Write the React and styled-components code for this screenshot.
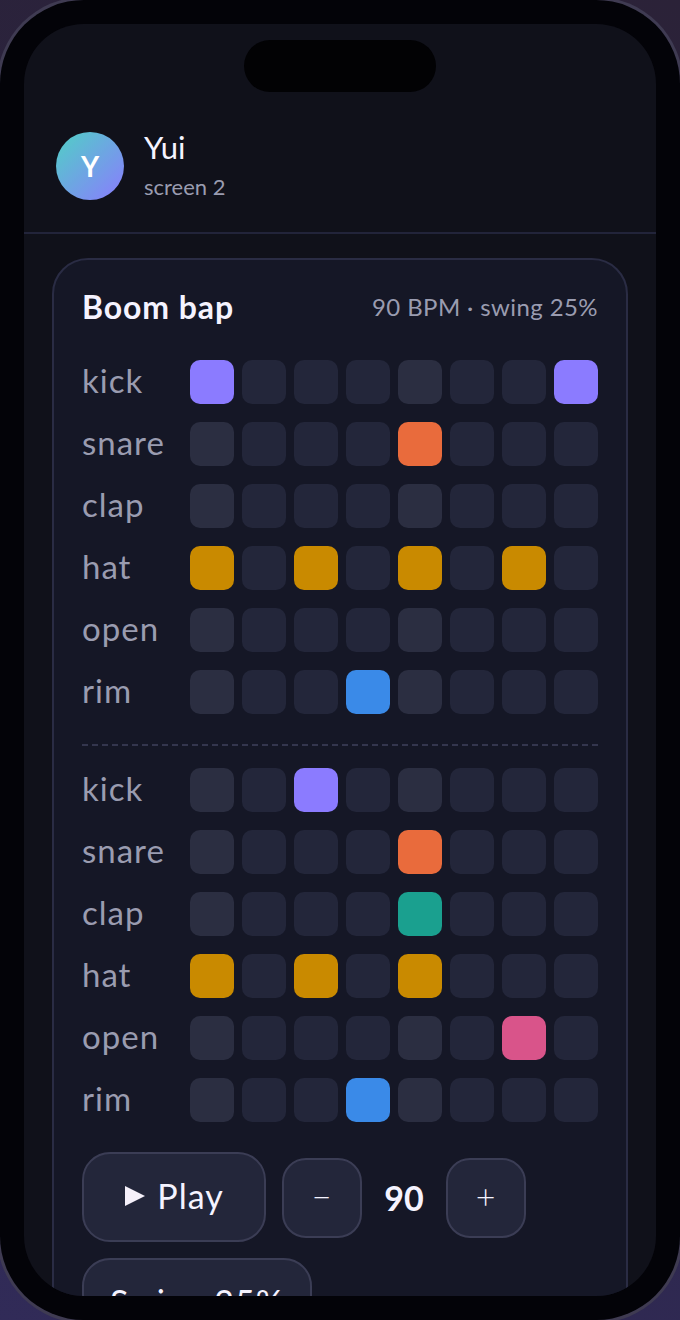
import React from "react";
import styled, { createGlobalStyle } from "styled-components";

const GlobalStyle = createGlobalStyle`
    * {
        box-sizing: border-box;
    }

    html, body {
        margin: 0;
        padding: 0;
        width: 680px;
        height: 1320px;
        overflow: hidden;
        background: linear-gradient(20deg, #312b58, #2a2340 60%, #2b2238);
    }

    body {
        font-family: Lato, "Noto Sans", sans-serif;
    }
`

const Phone = styled.div`
    position: relative;
    width: 680px;
    height: 1320px;
    padding: 24px;
    border-radius: 84px;
    background: #030308;
    box-shadow: 0 0 0 3px #3f3b52;
`

const Notch = styled.div`
    position: absolute;
    top: 40px;
    left: 244px;
    width: 192px;
    height: 52px;
    border-radius: 26px;
    background: #020204;
`

const Screen = styled.div`
    height: 1272px;
    border-radius: 60px;
    overflow: hidden;
    background: #10111a;
`

const Header = styled.header`
    display: flex;
    align-items: center;
    gap: 20px;
    height: 210px;
    padding: 108px 32px 32px;
    border-bottom: 2px solid #22243a;
`

const Avatar = styled.div`
    display: flex;
    align-items: center;
    justify-content: center;
    width: 68px;
    height: 68px;
    border-radius: 50%;
    background: linear-gradient(135deg, #4fd1c5, #8b7bff);
    color: #fff;
    font-size: 28px;
    font-weight: 700;
`

const Who = styled.div`
    display: flex;
    flex-direction: column;
    gap: 10px;
`

const Name = styled.strong`
    color: #f5f3ff;
    font-size: 31px;
    line-height: 32px;
    font-weight: 400;
`

const Sub = styled.span`
    color: #9a9cb0;
    font-size: 22px;
    line-height: 28px;
`

const Card = styled.section`
    margin: 24px 28px 0;
    padding: 26px 28px 0;
    height: 1100px;
    border: 2px solid #2a2c44;
    border-radius: 36px;
    background: #151726;
`

const CardHead = styled.div`
    display: flex;
    align-items: center;
    justify-content: space-between;
    height: 40px;
    margin-bottom: 34px;
`

const Title = styled.h2`
    margin: 0;
    color: #f5f3ff;
    font-size: 32px;
    font-weight: 700;
    letter-spacing: 0.9px;
`

const Meta = styled.span`
    color: #9a9cb0;
    font-size: 24px;
    letter-spacing: 0.4px;
`

const Grid = styled.div`
    display: flex;
    flex-direction: column;
    gap: 18px;
`

const Row = styled.div`
    display: flex;
    align-items: center;
    gap: 8px;
`

const Label = styled.span`
    width: 100px;
    height: 44px;
    color: #9a9cb0;
    font-size: 33px;
    line-height: 41px;
    letter-spacing: 1px;
`

const Cell = styled.div`
    width: 44px;
    height: 44px;
    border-radius: 10px;
    background: ${(p) => p.$color || (p.$beat ? "#2b2e41" : "#23263a")};
`

const Divider = styled.div`
    margin: 30px 0 22px;
    border-top: 2px dashed #34364e;
`

const Controls = styled.div`
    display: flex;
    flex-wrap: wrap;
    align-items: center;
    gap: 16px;
    margin-top: 30px;
`

const Button = styled.button`
    display: flex;
    align-items: center;
    justify-content: center;
    height: 90px;
    width: ${(p) => p.$width}px;
    gap: 11px;
    padding: 0 0 3px;
    border: 2px solid #3b3d55;
    border-radius: 28px;
    background: #23263a;
    color: #f5f3ff;
    font-family: inherit;
    font-size: 34px;
    letter-spacing: 1px;
`

const StepButton = styled(Button)`
    width: 80px;
    height: 80px;
    margin-top: 1px;
    border-radius: 24px;
    font-size: 34px;
    font-weight: 300;
    line-height: 1;
`

const Tempo = styled.strong`
    width: 52px;
    text-align: center;
    color: #f5f3ff;
    font-size: 34px;
    font-weight: 700;
`

const purple = "#8b7bff";
const orange = "#e96b3c";
const amber = "#c98a00";
const blue = "#3a8ae8";
const teal = "#1aa08f";
const pink = "#d9548a";

const patterns = [
    [
        ["kick", { 0: purple, 7: purple }],
        ["snare", { 4: orange }],
        ["clap", {}],
        ["hat", { 0: amber, 2: amber, 4: amber, 6: amber }],
        ["open", {}],
        ["rim", { 3: blue }],
    ],
    [
        ["kick", { 2: purple }],
        ["snare", { 4: orange }],
        ["clap", { 4: teal }],
        ["hat", { 0: amber, 2: amber, 4: amber }],
        ["open", { 6: pink }],
        ["rim", { 3: blue }],
    ],
]

function Pattern({ rows }) {
    return (
        <Grid>
            {rows.map(([name, hits]) => (
                <Row key={name}>
                    <Label>{name}</Label>
                    {[0, 1, 2, 3, 4, 5, 6, 7].map((i) => (
                        <Cell key={i} $beat={i % 4 === 0} $color={hits[i]} />
                    ))}
                </Row>
            ))}
        </Grid>
    )
}

export default function App() {
    return (
        <Phone>
            <GlobalStyle />
            <Notch />
            <Screen>
                <Header>
                    <Avatar>Y</Avatar>
                    <Who>
                        <Name>Yui</Name>
                        <Sub>screen 2</Sub>
                    </Who>
                </Header>
                <Card>
                    <CardHead>
                        <Title>Boom bap</Title>
                        <Meta>90 BPM · swing 25%</Meta>
                    </CardHead>
                    <Pattern rows={patterns[0]} />
                    <Divider />
                    <Pattern rows={patterns[1]} />
                    <Controls>
                        <Button $width={184}>
                            <svg width="22" height="22" viewBox="0 0 22 22">
                                <path d="M1 1 L21 11 L1 21 Z" fill="#f5f0fa" />
                            </svg>
                            Play
                        </Button>
                        <StepButton>−</StepButton>
                        <Tempo>90</Tempo>
                        <StepButton>+</StepButton>
                        <Button $width={230}>Swing 25%</Button>
                    </Controls>
                </Card>
            </Screen>
        </Phone>
    )
}
